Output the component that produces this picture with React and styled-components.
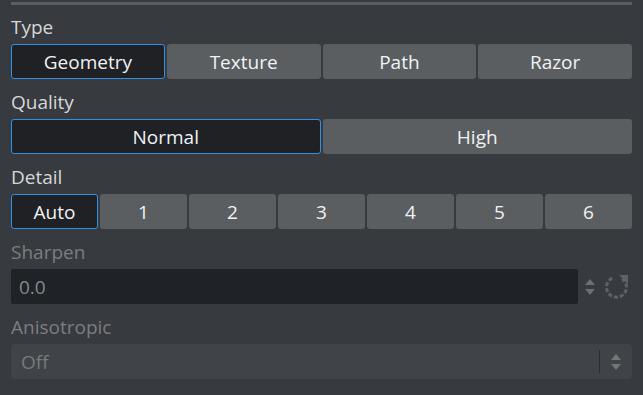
import React from "react";
import styled, { createGlobalStyle } from "styled-components";

const Global = createGlobalStyle`
  html, body { margin: 0; padding: 0; background: #373a3e; }
  body { font-family: "Open Sans", "Noto Sans", sans-serif; }
`;

const Panel = styled.div`
  width: 643px;
  height: 395px;
  box-sizing: border-box;
  padding: 2px 11px 0 11px;
  background: #373a3e;
  display: flex;
  flex-direction: column;
`;

const Divider = styled.div`
  height: 3px;
  background: #5b5f63;
`;

const Label = styled.div`
  height: ${(p) => (p.$first ? 39 : 40)}px;
  box-sizing: border-box;
  display: flex;
  align-items: flex-end;
  padding-bottom: 4px;
  font-size: 19px;
  line-height: 26px;
  color: ${(p) => (p.$disabled ? "#7b7e82" : "#d6d7d8")};
`;

const Segments = styled.div`
  display: grid;
  grid-template-columns: repeat(${(p) => p.$count}, 1fr);
  gap: 2px;
  height: 35px;
`;

const Segment = styled.div`
  box-sizing: border-box;
  display: flex;
  align-items: center;
  justify-content: center;
  border-radius: 3px;
  font-size: 19px;
  color: #f0f2f4;
  background: ${(p) => (p.$active ? "#1f2125" : "#5a5e61")};
  border: 1px solid ${(p) => (p.$active ? "#2e90e8" : "transparent")};
`;

const InputRow = styled.div`
  display: flex;
  align-items: center;
  height: 35px;
`;

const NumberInput = styled.div`
  flex: 1;
  height: 35px;
  box-sizing: border-box;
  background: #1f2226;
  border-radius: 2px;
  display: flex;
  align-items: center;
  padding-left: 8px;
  font-size: 19px;
  color: #85888b;
`;

const SpinBox = styled.div`
  width: 24px;
  display: flex;
  justify-content: center;
`;

const ResetBox = styled.div`
  width: 30px;
  display: flex;
  justify-content: center;
`;

const Select = styled.div`
  height: 35px;
  box-sizing: border-box;
  background: #404347;
  border-radius: 4px;
  display: flex;
  align-items: center;
  padding-left: 10px;
  font-size: 19px;
  color: #76797d;
`;

const SelectText = styled.div`
  flex: 1;
`;

const SelectDivider = styled.div`
  width: 1px;
  height: 23px;
  background: #2b2e31;
`;

const SelectArrows = styled.div`
  width: 32px;
  display: flex;
  justify-content: center;
`;

const Arrows = ({ color = "#6c6f73" }) => (
  <svg width="12" height="20" viewBox="0 0 12 20">
    <polygon points="6,2 11,8 1,8" fill={color} />
    <polygon points="6,18 11,12 1,12" fill={color} />
  </svg>
);

const ResetIcon = () => (
  <svg width="26" height="26" viewBox="0 0 26 26">
    <path
      d="M18 4.8 A10 10 0 1 1 8.5 4"
      fill="none"
      stroke="#5e6166"
      strokeWidth="3"
      strokeDasharray="4 2"
    />
    <polygon points="15,1 24,1 24,10" fill="#5e6166" />
  </svg>
);

const SegmentGroup = ({ items, active }) => (
  <Segments $count={items.length}>
    {items.map((it) => (
      <Segment key={it} $active={it === active}>
        {it}
      </Segment>
    ))}
  </Segments>
);

export default function App() {
  return (
    <>
      <Global />
      <Panel>
        <Divider />
        <Label $first>Type</Label>
        <SegmentGroup items={["Geometry", "Texture", "Path", "Razor"]} active="Geometry" />
        <Label>Quality</Label>
        <SegmentGroup items={["Normal", "High"]} active="Normal" />
        <Label>Detail</Label>
        <SegmentGroup items={["Auto", "1", "2", "3", "4", "5", "6"]} active="Auto" />
        <Label $disabled>Sharpen</Label>
        <InputRow>
          <NumberInput>0.0</NumberInput>
          <SpinBox>
            <Arrows />
          </SpinBox>
          <ResetBox>
            <ResetIcon />
          </ResetBox>
        </InputRow>
        <Label $disabled>Anisotropic</Label>
        <Select>
          <SelectText>Off</SelectText>
          <SelectDivider />
          <SelectArrows>
            <Arrows color="#737679" />
          </SelectArrows>
        </Select>
      </Panel>
    </>
  );
}
